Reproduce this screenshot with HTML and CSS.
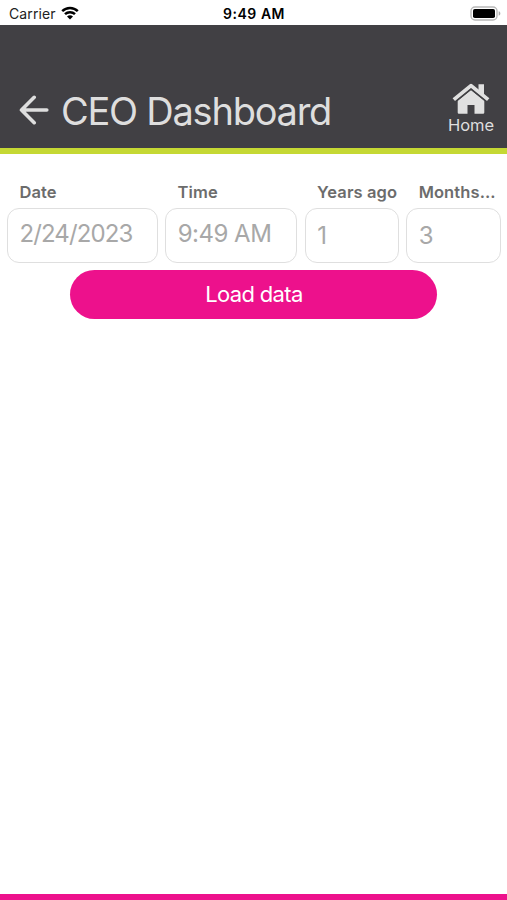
FILE: index.html
```html
<!DOCTYPE html>
<html lang="en">

<head>
    <meta charset="UTF-8">
    <meta name="viewport" content="width=device-width, initial-scale=1.0">
    <title>CEO Dashboard</title>
    <link rel="stylesheet" href="styles.css">
</head>

<body>
    <div class="status-bar">
        <div class="carrier">
            <span>Carrier</span>
            <svg class="wifi" viewBox="0 0 18 14" width="18" height="14">
                <path d="M1.2 5.2a11.2 11.2 0 0 1 15.6 0M4 8.2a7.2 7.2 0 0 1 10 0" fill="none" stroke="#000" stroke-width="2.5"/>
                <path d="M9 13.6 6 10.6a4.3 4.3 0 0 1 6 0z" fill="#000"/>
            </svg>
        </div>
        <span class="clock">9:49 AM</span>
        <svg class="battery" viewBox="0 0 31 15" width="31" height="15">
            <rect x="1" y="1" width="26" height="13" rx="4" fill="#fff" stroke="#b8b8b8" stroke-width="1.4"/>
            <rect x="3" y="3" width="22" height="9" rx="1.8" fill="#000"/>
            <path d="M28.7 5.3c2.2.7 2.2 3.7 0 4.4z" fill="#aaa"/>
        </svg>
    </div>
    <header>
        <svg class="back" viewBox="0 0 30 30" width="30" height="30">
            <path d="M15.2 2.3 2.5 15l12.7 12.7M2.5 15h25.3" fill="none" stroke="#dedede" stroke-width="3.6" stroke-linecap="round" stroke-linejoin="round"/>
        </svg>
        <h1>CEO Dashboard</h1>
        <div class="home">
            <svg viewBox="0 0 38 31" width="38" height="31">
                <path d="M26.5 1.2h5.5v13l-5.5-5z" fill="#e0e0e0"/>
                <path d="M1.8 16.6 19 2.6l17.2 14" fill="none" stroke="#e0e0e0" stroke-width="3.8" stroke-linejoin="round"/>
                <path d="M5.7 17.8 19 7l13.3 10.8v11.7q0 1.2-1.2 1.2H22.5V22h-7v8.7H6.9q-1.2 0-1.2-1.2z" fill="#e0e0e0"/>
                <path d="M4.2 18.2 19 6.2l14.8 12" fill="none" stroke="#414044" stroke-width="1.1"/>
            </svg>
            <span>Home</span>
        </div>
    </header>
    <main>
        <form>
            <div class="fields">
                <div class="field">
                    <label for="date">Date</label>
                    <input type="text" id="date" class="date" value="2/24/2023">
                </div>
                <div class="field">
                    <label for="time">Time</label>
                    <input type="text" id="time" class="time" value="9:49 AM">
                </div>
                <div class="field">
                    <label for="years">Years ago</label>
                    <input type="text" id="years" class="number" value="1">
                </div>
                <div class="field">
                    <label for="months">Months...</label>
                    <input type="text" id="months" class="number" value="3">
                </div>
            </div>
            <button type="button">Load data</button>
        </form>
    </main>
    <footer></footer>
</body>

</html>
```
FILE: styles.css
```css
* {
    box-sizing: border-box;
}

body {
    display: flex;
    flex-direction: column;
    height: 100vh;
    margin: 0;
    background-color: #fff;
    font-family: Inter, "Liberation Sans", sans-serif;
}

/* Status bar */
.status-bar {
    display: grid;
    grid-template-columns: 1fr auto 1fr;
    height: 25px;
    padding: 0 6px 0 9px;
    font-size: 14px;
    line-height: 27px;
    color: #222;
}

.carrier {
    display: flex;
    gap: 5px;
    letter-spacing: 0.1px;
}

.wifi {
    margin-top: 6px;
}

.clock {
    font-weight: 600;
    letter-spacing: 0.55px;
    margin-right: 2px;
    color: #000;
}

.battery {
    justify-self: end;
    margin-top: 6px;
}

/* Header */
header {
    display: flex;
    height: 129px;
    padding-left: 19px;
    background-color: #414044;
    border-bottom: 6px solid #c5d834;
    color: #dedede;
}

.back {
    margin-top: 70px;
}

h1 {
    margin: 63px 0 0 12px;
    font-size: 38px;
    font-weight: 400;
    line-height: 46px;
    letter-spacing: -1.25px;
    white-space: nowrap;
}

.home {
    display: flex;
    flex-direction: column;
    align-items: center;
    width: 72px;
    margin-left: auto;
    padding-top: 58px;
    font-size: 16.5px;
    line-height: 22px;
}

/* Query form */
main {
    flex: 1;
    padding: 28px 6px 0 7px;
}

.fields {
    display: grid;
    grid-template-columns: 151px 132.3px 94.4px 94.4px;
    gap: 7.2px;
}

label {
    display: block;
    height: 26px;
    padding-left: 12.4px;
    font-size: 16.5px;
    font-weight: 600;
    line-height: 20px;
    letter-spacing: 0.1px;
    color: #6c6c6c;
    white-space: nowrap;
}

input {
    display: block;
    width: 100%;
    height: 54.5px;
    padding: 0 0 3px 11.5px;
    border: 1.5px solid #dfdfdf;
    border-radius: 12px;
    background-color: #fff;
    font-family: inherit;
    font-size: 24px;
    font-weight: 400;
    color: #a8a8a8;
}

.date {
    letter-spacing: -0.9px;
}

.time {
    letter-spacing: -0.5px;
}

.number {
    padding-bottom: 0;
}

button {
    display: block;
    width: 367px;
    height: 49px;
    margin: 7px auto 0 63.4px;
    padding: 0 0 1px;
    border: none;
    border-radius: 25px;
    background-color: #ed118c;
    color: #fff;
    font-family: inherit;
    font-size: 22px;
    letter-spacing: -0.65px;
}

footer {
    height: 6px;
    background-color: #ed118c;
}
```
